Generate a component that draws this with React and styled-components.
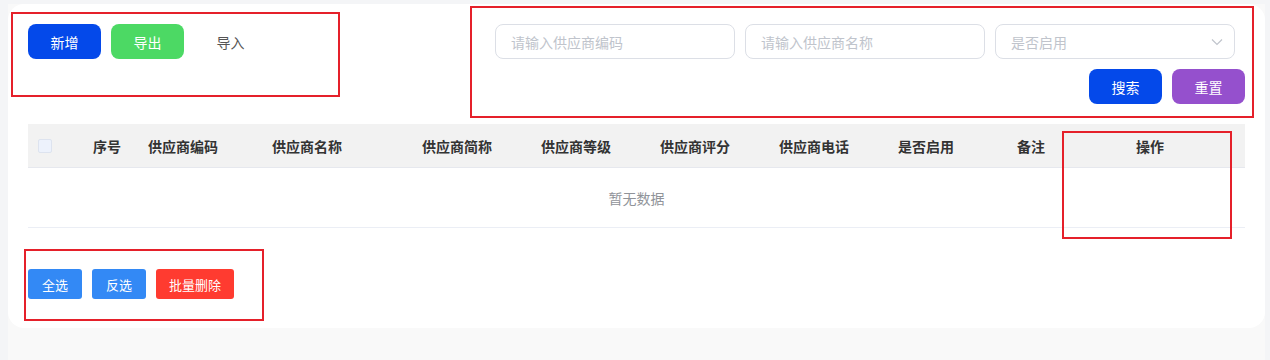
import React from "react";
import styled, { createGlobalStyle } from "styled-components";

const GlobalStyle = createGlobalStyle`
  html, body {
    margin: 0;
    padding: 0;
    background: #f4f5f7;
    font-family: "Noto Sans CJK SC", "Noto Sans", sans-serif;
  }
`;

const columns = [
  { key: "sel", width: 65 },
  { key: "序号", width: 55 },
  { key: "供应商编码", width: 124 },
  { key: "供应商名称", width: 150 },
  { key: "供应商简称", width: 119 },
  { key: "供应商等级", width: 119 },
  { key: "供应商评分", width: 119 },
  { key: "供应商电话", width: 119 },
  { key: "是否启用", width: 119 },
  { key: "备注", width: 119 },
  { key: "操作", width: 109 },
];

const marks = [
  { left: 11, top: 12, width: 329, height: 85 },
  { left: 470, top: 6, width: 784, height: 112 },
  { left: 1062, top: 131, width: 170, height: 108 },
  { left: 24, top: 249, width: 240, height: 72 },
];

const App = () => {
  return (
    <Page>
      <GlobalStyle />
      <Inner>
        <Card>
          <TopBar>
            <ActionGroup>
              <Button bg="#0449ea">新增</Button>
              <Button bg="#4cd964">导出</Button>
              <Button bg="transparent" color="#555">
                导入
              </Button>
            </ActionGroup>
            <FilterPanel>
              <InputRow>
                <Field placeholder="请输入供应商编码" />
                <Field placeholder="请输入供应商名称" />
                <SelectBox>
                  <span>是否启用</span>
                  <svg width="12" height="8" viewBox="0 0 12 8">
                    <path
                      d="M1 1.5 L6 6.5 L11 1.5"
                      fill="none"
                      stroke="#c0c4cc"
                      strokeWidth="1.2"
                    />
                  </svg>
                </SelectBox>
              </InputRow>
              <ButtonRow>
                <Button bg="#0449ea">搜索</Button>
                <Button bg="#9550cd">重置</Button>
              </ButtonRow>
            </FilterPanel>
          </TopBar>

          <Table>
            <HeadRow>
              {columns.map((c) => (
                <HeadCell key={c.key} style={{ width: c.width }}>
                  {c.key === "sel" ? <Check /> : c.key}
                </HeadCell>
              ))}
            </HeadRow>
            <EmptyRow>暂无数据</EmptyRow>
          </Table>

          <BottomBar>
            <SmallButton bg="#3389f5">全选</SmallButton>
            <SmallButton bg="#3389f5">反选</SmallButton>
            <SmallButton bg="#ff3b30" wide>
              批量删除
            </SmallButton>
          </BottomBar>
        </Card>
      </Inner>

      {marks.map((m, i) => (
        <Mark
          key={i}
          style={{ left: m.left, top: m.top, width: m.width, height: m.height }}
        />
      ))}
    </Page>
  );
};

const Page = styled.div`
  position: relative;
  width: 1270px;
  height: 360px;
  padding: 4px 5px 0 8px;
  box-sizing: border-box;
  background: #f4f5f7;
  overflow: hidden;
`;

const Inner = styled.div`
  height: 100%;
  background: #f9f9f9;
`;

const Card = styled.div`
  background: #fff;
  border-radius: 16px;
  padding: 20px 20px 29px 20px;
  box-sizing: border-box;
`;

const TopBar = styled.div`
  display: flex;
  justify-content: space-between;
  align-items: flex-start;
`;

const ActionGroup = styled.div`
  display: flex;
  gap: 10px;
`;

const Button = styled.button`
  width: 73px;
  height: 35px;
  border: none;
  border-radius: 8px;
  background: ${(p) => p.bg};
  color: ${(p) => p.color || "#fff"};
  font-family: inherit;
  font-size: 14px;
  padding: 0;
  cursor: pointer;
`;

const FilterPanel = styled.div`
  display: flex;
  flex-direction: column;
  align-items: flex-end;
  gap: 10px;
`;

const InputRow = styled.div`
  display: flex;
  gap: 10px;
  margin-right: 10px;
`;

const Field = styled.input`
  width: 240px;
  height: 35px;
  box-sizing: border-box;
  border: 1px solid #dcdfe6;
  border-radius: 8px;
  padding: 0 15px;
  font-family: inherit;
  font-size: 14px;
  outline: none;
  &::placeholder {
    color: #c0c4cc;
  }
`;

const SelectBox = styled.div`
  width: 240px;
  height: 35px;
  box-sizing: border-box;
  border: 1px solid #dcdfe6;
  border-radius: 8px;
  padding: 0 11px 0 15px;
  display: flex;
  align-items: center;
  justify-content: space-between;
  color: #c0c4cc;
  font-size: 14px;
`;

const ButtonRow = styled.div`
  display: flex;
  gap: 10px;
`;

const Table = styled.div`
  margin-top: 20px;
`;

const HeadRow = styled.div`
  display: flex;
  height: 44px;
  background: #f2f2f2;
  border-bottom: 1px solid #e6e8ee;
  box-sizing: border-box;
`;

const HeadCell = styled.div`
  display: flex;
  align-items: center;
  flex-shrink: 0;
  white-space: nowrap;
  font-size: 14px;
  font-weight: 700;
  color: #333;
  &:first-child {
    padding-left: 10px;
    box-sizing: border-box;
  }
`;

const Check = styled.span`
  width: 14px;
  height: 14px;
  box-sizing: border-box;
  border: 1px solid #dde3ef;
  border-radius: 2px;
  background: #edf2fc;
`;

const EmptyRow = styled.div`
  height: 60px;
  border-bottom: 1px solid #ebeef5;
  box-sizing: border-box;
  display: flex;
  align-items: center;
  justify-content: center;
  color: #909399;
  font-size: 14px;
`;

const BottomBar = styled.div`
  display: flex;
  gap: 10px;
  margin-top: 41px;
`;

const SmallButton = styled.button`
  width: ${(p) => (p.wide ? "78px" : "54px")};
  height: 30px;
  border: none;
  border-radius: 3px;
  background: ${(p) => p.bg};
  color: #fff;
  font-family: inherit;
  font-size: 13px;
  padding: 0;
`;

const Mark = styled.div`
  position: absolute;
  border: 2px solid #e5202a;
  box-sizing: border-box;
  pointer-events: none;
`;

export default App;
